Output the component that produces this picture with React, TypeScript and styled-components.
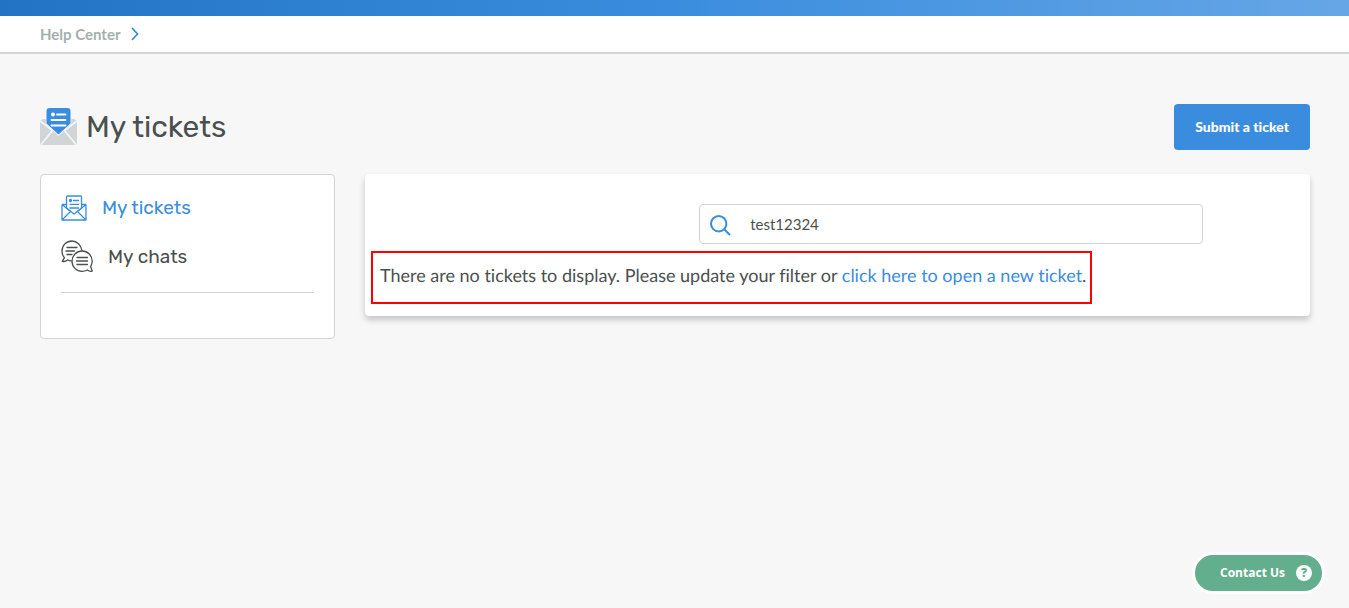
import React from "react";
import styled, { createGlobalStyle } from "styled-components";

const colors = {
  blue: "#3a8dde",
  text: "#4b4f4f",
  border: "#d1d5d5",
  muted: "#a3afaf",
  green: "#63ae8d",
};

const GlobalStyle = createGlobalStyle`
  * { box-sizing: border-box; }
  body {
    margin: 0;
    background: #f7f7f7;
    color: ${colors.text};
    font-family: Lato, "Liberation Sans", sans-serif;
    font-variant-ligatures: none;
  }
`;

const TopBar = styled.div`
  height: 16px;
  background: linear-gradient(90deg, #2273c3 0%, #3a8dde 50%, #66a6e6 100%);
`;

const Breadcrumbs = styled.nav`
  display: flex;
  align-items: center;
  gap: 11px;
  height: 38px;
  padding: 0 40px;
  background: #fff;
  border-bottom: 2px solid ${colors.border};
`;

const Crumb = styled.a`
  color: ${colors.muted};
  font-size: 15px;
  font-weight: 700;
  line-height: 20px;
  text-decoration: none;
`;

const Page = styled.main`
  padding: 50px 39px 50px 40px;
`;

const PageHeader = styled.header`
  display: flex;
  align-items: center;
  justify-content: space-between;
  margin-bottom: 24px;
`;

const Title = styled.h1`
  display: flex;
  align-items: center;
  gap: 9px;
  margin: 0;
  font-family: Rubik, Roboto, sans-serif;
  font-size: 30px;
  font-weight: 400;
  line-height: 38px;
`;

const SubmitButton = styled.button`
  height: 46px;
  padding: 0 21px;
  border: 0;
  border-radius: 4px;
  background: ${colors.blue};
  color: #fff;
  font: 900 14px/20px Lato, sans-serif;
  font-variant-ligatures: none;
  cursor: pointer;
`;

const Columns = styled.div`
  display: grid;
  grid-template-columns: 295px minmax(0, 1fr);
  gap: 30px;
  align-items: start;
`;

const Sidebar = styled.aside`
  padding: 16px 20px 45px;
  background: #fff;
  border: 1px solid ${colors.border};
  border-radius: 4px;
`;

const SideMenu = styled.nav`
  display: flex;
  flex-direction: column;
  gap: 16px;
  padding-bottom: 19px;
  border-bottom: 1px solid ${colors.border};
`;

const SideLink = styled.a<{ $active?: boolean }>`
  display: flex;
  align-items: center;
  gap: 15px;
  height: 33px;
  color: ${(p) => (p.$active ? colors.blue : colors.text)};
  font-family: Rubik, Roboto, sans-serif;
  font-size: 19px;
  font-weight: 400;
  line-height: 24px;
  text-decoration: none;
`;

const Panel = styled.section`
  padding: 30px 6px 12px;
  background: #fff;
  border-radius: 4px;
  box-shadow: 0 4px 6px rgba(0, 0, 0, 0.2);
`;

const SearchBox = styled.label`
  display: flex;
  align-items: center;
  gap: 19px;
  width: 54%;
  height: 40px;
  margin: 0 101px 7px auto;
  padding: 0 10px;
  border: 1px solid ${colors.border};
  border-radius: 4px;
`;

const SearchInput = styled.input`
  flex: 1;
  min-width: 0;
  padding: 0;
  border: 0;
  outline: 0;
  background: transparent;
  color: ${colors.text};
  font: 400 15px/20px Lato, sans-serif;
`;

const Notice = styled.p`
  width: fit-content;
  margin: 0;
  padding: 10px 4px 15px 7px;
  border: 2px solid #f00;
  font-size: 18px;
  line-height: 24px;
  text-rendering: geometricPrecision;
`;

const NoticeLink = styled.a`
  color: ${colors.blue};
  text-decoration: none;
`;

const ContactButton = styled.button`
  position: fixed;
  right: 24px;
  bottom: 14px;
  display: flex;
  align-items: center;
  gap: 11px;
  height: 42px;
  padding: 0 10px 0 25px;
  border: 3px solid #fff;
  border-radius: 21px;
  background: ${colors.green};
  color: #fff;
  font: 700 12px/16px "Open Sans", sans-serif;
  cursor: pointer;
`;

const HelpBadge = styled.span`
  width: 16px;
  height: 16px;
  border-radius: 50%;
  background: #fff;
  color: ${colors.green};
  font-size: 12px;
  font-weight: 800;
  line-height: 16px;
  text-align: center;
`;

const Chevron = () => (
  <svg width="8" height="14" viewBox="0 0 8 14" fill="none" stroke={colors.blue} strokeWidth="1.8" aria-hidden="true">
    <path d="M1 1l5.5 6L1 13" />
  </svg>
);

const EnvelopeSolid = () => (
  <svg width="37" height="38" viewBox="0 0 37 38" aria-hidden="true">
    <path d="M0 13L3 11H34L37 13V37H0z" fill="#d1d5d5" />
    <path d="M0 13L12.500 22.600L.8 36.800M37 13L24.500 22.600L36.200 36.800" fill="none" stroke="#f7f7f7" strokeWidth="1.600" />
    <path d="M5.800 16V3q0-3 3-3h19.400q3 0 3 3v13L18.500 28z" fill="#f7f7f7" />
    <path d="M6.500 15.500V3Q6.500 0 9.500 0h18q3 0 3 3v12.500L18.500 26.500z" fill={colors.blue} />
    <circle cx="13" cy="6.500" r="2" fill="#fff" />
    <path d="M17 6.500h8.500M11.500 12h14M11.500 17.500h14" stroke="#fff" strokeWidth="1.800" strokeLinecap="round" />
  </svg>
);

const EnvelopeOutline = () => (
  <svg width="26" height="26" viewBox="0 0 26 26" fill="none" stroke={colors.blue} strokeWidth="1.300" strokeLinejoin="round" aria-hidden="true">
    <path d="M1 9.500V25h24V9.500M1 9.500l8.500 7M25 9.500l-8.500 7M1 25l8.500-8.500M25 25l-8.500-8.500M1 9.500h4.500M25 9.500h-4.500" />
    <path d="M5.500 13V2q0-1 1-1h13q1 0 1 1v11L13 19z" />
    <circle cx="9.500" cy="5.500" r="1" fill={colors.blue} />
    <path d="M12 5.500h6M8.500 9.300h9.500M8.500 13h9.500" />
  </svg>
);

const Chats = () => (
  <svg width="32" height="33" viewBox="0 1 32 33" fill="none" stroke={colors.text} strokeWidth="1.300" strokeLinecap="round" strokeLinejoin="round" aria-hidden="true">
    <path d="M21 11.500C20 6 16 2 11 2 5.300 2 1 6.300 1 12c0 2.700.8 5 2.400 6.800L1.200 22.300c2 .5 4-.1 5.300-1.300 1.200.6 2.600.9 4 .9" />
    <path d="M29.600 27.500C30.700 26 31.200 24.200 31.200 22.200c0-5.600-4.500-10.200-10.100-10.200S11 16.600 11 22.200s4.500 10.200 10.100 10.200c1.900 0 3.700-.5 5.200-1.400 1.300 1.100 3 1.600 5 1.200z" />
    <path d="M6 8.500h10M5 12h8.500M6 15.500h5M16 18.500h10.500M15.500 22h11M16 25.500h10.500" />
  </svg>
);

const Magnifier = () => (
  <svg width="21" height="24" viewBox="0 -3 21 24" fill="none" stroke={colors.blue} strokeWidth="2" aria-hidden="true">
    <circle cx="8.700" cy="8.700" r="7.700" />
    <path d="M14.200 14.200L20 20" />
  </svg>
);

export default function App() {
  return (
    <>
      <GlobalStyle />
      <TopBar />
      <Breadcrumbs aria-label="Breadcrumb">
        <Crumb href="#">Help Center</Crumb>
        <Chevron />
      </Breadcrumbs>
      <Page>
        <PageHeader>
          <Title>
            <EnvelopeSolid />
            My tickets
          </Title>
          <SubmitButton type="button">Submit a ticket</SubmitButton>
        </PageHeader>
        <Columns>
          <Sidebar>
            <SideMenu>
              <SideLink href="#tickets" $active>
                <EnvelopeOutline />
                My tickets
              </SideLink>
              <SideLink href="#chats">
                <Chats />
                My chats
              </SideLink>
            </SideMenu>
          </Sidebar>
          <Panel>
            <SearchBox>
              <Magnifier />
              <SearchInput type="text" aria-label="Search tickets" defaultValue="test12324" />
            </SearchBox>
            <Notice>
              There are no tickets to display. Please update your filter or{" "}
              <NoticeLink href="#new">click here to open a new ticket</NoticeLink>.
            </Notice>
          </Panel>
        </Columns>
      </Page>
      <ContactButton type="button">
        Contact Us
        <HelpBadge>?</HelpBadge>
      </ContactButton>
    </>
  );
}
